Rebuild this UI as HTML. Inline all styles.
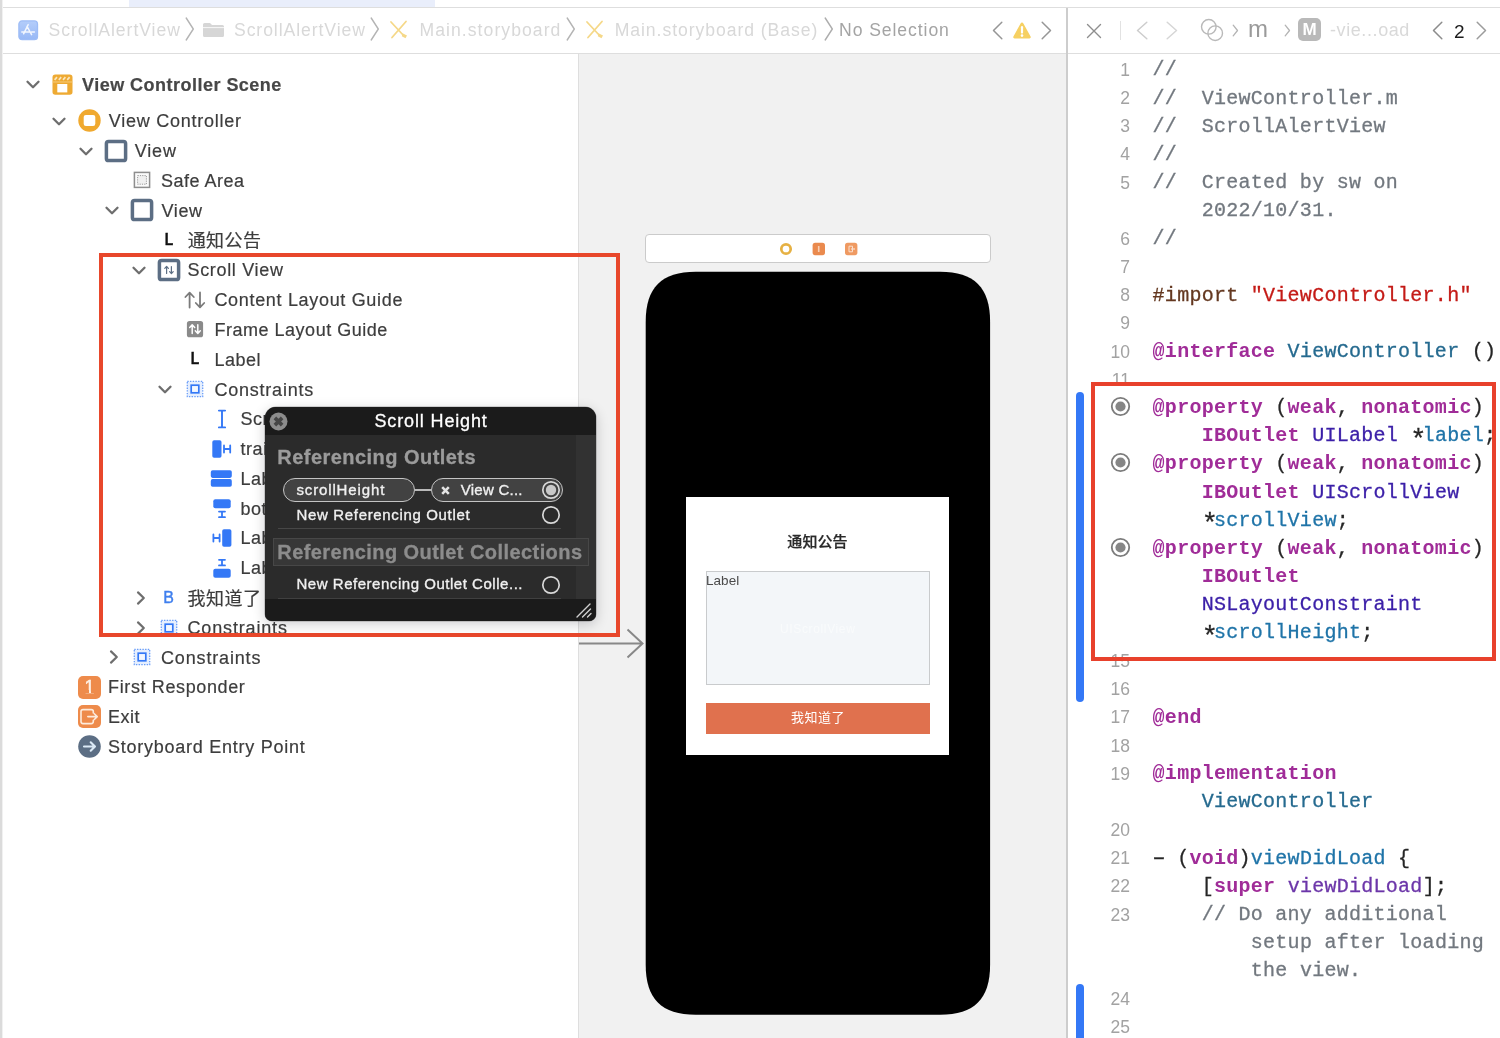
<!DOCTYPE html>
<html lang="en">
<head>
<meta charset="utf-8">
<title>Main.storyboard — ScrollAlertView</title>
<style>
*{box-sizing:border-box;margin:0;padding:0}
html,body{width:1500px;height:1038px;overflow:hidden;background:#fff}
body{position:relative;font-family:"Liberation Sans","Noto Sans CJK SC",sans-serif;color:#3a3a3a}
.abs{position:absolute}
#root{position:absolute;left:0;top:0;width:1500px;height:1038px;overflow:hidden;will-change:transform;background:#fff}
.t{position:absolute;height:30px;line-height:30px;white-space:pre}
#outlinewrap .t{-webkit-text-stroke:0.2px currentColor}
#tab{left:129px;top:0;width:305.5px;height:7px;background:#e9eefb}
#topline{left:0;top:6.8px;width:1500px;height:1.2px;background:#dedede}
#barline{left:0;top:52.8px;width:1500px;height:1.2px;background:#dedede}
#leftedge{left:0;top:0;width:3.2px;height:1038px;background:linear-gradient(90deg,#dbdbdb 0,#dbdbdb 1.6px,#efefef 1.6px,#f3f3f3 3.2px)}
#canvas{left:578px;top:54px;width:489px;height:984px;background:#f1f1f1;border-left:1px solid #dedede}
#divider{left:1066px;top:8px;width:1.6px;height:1030px;background:#cdcdcd}
#outline{left:3px;top:54px;width:575px;height:984px;overflow:hidden}
.ln{position:absolute;left:1068px;width:62px;text-align:right;font-family:"Liberation Sans",sans-serif;font-size:17.5px;color:#a2a2a2;height:28px;line-height:28px}
.cl{position:absolute;font-family:"Liberation Mono",monospace;font-size:20px;letter-spacing:0.27px;white-space:pre;height:28px;line-height:28px;color:#262626}
.cl{-webkit-text-stroke:0.3px currentColor}
.cl span{-webkit-text-stroke:0.3px currentColor}
.cl .kw{-webkit-text-stroke:0}
.as{display:inline-block;width:12.27px;text-align:center;letter-spacing:0;font-size:27px;line-height:0;position:relative;top:6.5px}
.mn{display:inline-block;transform:scaleX(1.7)}
.cm{color:#72787f}
.kw{color:#a02c98;font-weight:bold}
.st{color:#c41a16}
.pp{color:#643820}
.ty{color:#256a8f}
.cls{color:#3b1fa8}
.dec{color:#1f74a8}
.oth{color:#6c36a9}
</style>
</head>
<body>
<div id="root">
<div id="tab" class="abs"></div>
<div id="topline" class="abs"></div>
<div id="barline" class="abs"></div>
<!-- jump bar -->
<svg class="abs" style="left:17.6px;top:20px" width="21" height="21" viewBox="0 0 21 21"><defs><linearGradient id="pg" x1="0" y1="0" x2="0" y2="1"><stop offset="0" stop-color="#b4cdfa"/><stop offset="1" stop-color="#97b8f6"/></linearGradient></defs><rect x="0.9" y="0.9" width="18.6" height="18.8" rx="3.2" fill="url(#pg)" stroke="#9dbcf6" stroke-width="1.3"/><path d="M10.2 4.6 L5.6 13.8 M9 6.4 L13.6 14.6 M3.8 12 H12.2 M13.6 12 H16.4" stroke="#f2f6fe" stroke-width="1.5" fill="none" stroke-linecap="round"/></svg>
<div class="t" style="left:48.5px;top:15.4px;font-size:17.6px;font-weight:normal;color:#d8d8d8;letter-spacing:0.96px;font-family:'Liberation Sans','Noto Sans CJK SC',sans-serif;">ScrollAlertView</div>
<svg class="abs" style="left:185px;top:17px" width="10" height="24" viewBox="0 0 10 24"><path d="M1.2 1 L8.3 12 L1.2 23" fill="none" stroke="#b4b4b4" stroke-width="1.4" stroke-linecap="round" stroke-linejoin="round"/></svg>
<svg class="abs" style="left:202px;top:22px" width="23" height="16" viewBox="0 0 23 16"><path d="M1 2.5 Q1 1 2.5 1 H8 L10 3 H20.5 Q22 3 22 4.5 V13.5 Q22 15 20.5 15 H2.5 Q1 15 1 13.5 Z" fill="#d6d6d6"/><path d="M1 5.6 H22" stroke="#fff" stroke-width="0.8"/></svg>
<div class="t" style="left:234.0px;top:15.4px;font-size:17.6px;font-weight:normal;color:#d8d8d8;letter-spacing:0.92px;font-family:'Liberation Sans','Noto Sans CJK SC',sans-serif;">ScrollAlertView</div>
<svg class="abs" style="left:370px;top:17px" width="10" height="24" viewBox="0 0 10 24"><path d="M1.2 1 L8.3 12 L1.2 23" fill="none" stroke="#b4b4b4" stroke-width="1.4" stroke-linecap="round" stroke-linejoin="round"/></svg>
<svg class="abs" style="left:389px;top:20px" width="20" height="20" viewBox="0 0 20 20"><path d="M2 2 L15 16 M17 1.5 L3 17.5" stroke="#f5d888" stroke-width="1.8" stroke-linecap="round"/><path d="M13.5 13.2 L18 15.5 L16.5 18.3 L12.8 16.2 Z" fill="#f5d888"/></svg>
<div class="t" style="left:419.5px;top:15.4px;font-size:17.6px;font-weight:normal;color:#d8d8d8;letter-spacing:1.05px;font-family:'Liberation Sans','Noto Sans CJK SC',sans-serif;">Main.storyboard</div>
<svg class="abs" style="left:566px;top:17px" width="10" height="24" viewBox="0 0 10 24"><path d="M1.2 1 L8.3 12 L1.2 23" fill="none" stroke="#b4b4b4" stroke-width="1.4" stroke-linecap="round" stroke-linejoin="round"/></svg>
<svg class="abs" style="left:584.5px;top:20px" width="20" height="20" viewBox="0 0 20 20"><path d="M2 2 L15 16 M17 1.5 L3 17.5" stroke="#f5d888" stroke-width="1.8" stroke-linecap="round"/><path d="M13.5 13.2 L18 15.5 L16.5 18.3 L12.8 16.2 Z" fill="#f5d888"/></svg>
<div class="t" style="left:614.7px;top:15.4px;font-size:17.6px;font-weight:normal;color:#d8d8d8;letter-spacing:0.94px;font-family:'Liberation Sans','Noto Sans CJK SC',sans-serif;">Main.storyboard (Base)</div>
<svg class="abs" style="left:824px;top:17px" width="10" height="24" viewBox="0 0 10 24"><path d="M1.2 1 L8.3 12 L1.2 23" fill="none" stroke="#adadad" stroke-width="1.4" stroke-linecap="round" stroke-linejoin="round"/></svg>
<div class="t" style="left:839.0px;top:15.4px;font-size:17.6px;font-weight:normal;color:#a4a4a4;letter-spacing:0.92px;font-family:'Liberation Sans','Noto Sans CJK SC',sans-serif;">No Selection</div>
<svg class="abs" style="left:991.5px;top:21.0px" width="11" height="19" viewBox="0 0 11 19"><path d="M9.8 1.2 L1.5 9.5 L9.8 17.8" fill="none" stroke="#969696" stroke-width="1.5" stroke-linecap="round" stroke-linejoin="round"/></svg>
<svg class="abs" style="left:1012px;top:21px" width="20" height="19" viewBox="0 0 20 19"><path d="M10 1.6 Q10.9 1.6 11.4 2.5 L18.6 15.4 Q19.3 17.3 17.4 17.5 H2.6 Q0.7 17.3 1.4 15.4 L8.6 2.5 Q9.1 1.6 10 1.6 Z" fill="#f6d062"/><path d="M10 6.2 V11.6" stroke="#fff" stroke-width="2.2" stroke-linecap="round"/><circle cx="10" cy="14.6" r="1.3" fill="#fff"/></svg>
<svg class="abs" style="left:1040.5px;top:21.0px" width="11" height="19" viewBox="0 0 11 19"><path d="M1.2 1.2 L9.5 9.5 L1.2 17.8" fill="none" stroke="#969696" stroke-width="1.5" stroke-linecap="round" stroke-linejoin="round"/></svg>
<svg class="abs" style="left:1086px;top:23px" width="16" height="16" viewBox="0 0 16 16"><path d="M1.5 1.5 L14.5 14.5 M14.5 1.5 L1.5 14.5" stroke="#8e8e8e" stroke-width="1.4" stroke-linecap="round"/></svg>
<div class="abs" style="left:1119.5px;top:21px;width:1.5px;height:19px;background:#e2e2e2"></div>
<svg class="abs" style="left:1136px;top:21.0px" width="12" height="19" viewBox="0 0 12 19"><path d="M10.8 1.2 L1.5 9.5 L10.8 17.8" fill="none" stroke="#cdcdcd" stroke-width="1.5" stroke-linecap="round" stroke-linejoin="round"/></svg>
<svg class="abs" style="left:1166px;top:21.0px" width="12" height="19" viewBox="0 0 12 19"><path d="M1.2 1.2 L10.5 9.5 L1.2 17.8" fill="none" stroke="#d6d6d6" stroke-width="1.5" stroke-linecap="round" stroke-linejoin="round"/></svg>
<svg class="abs" style="left:1200px;top:18px" width="24" height="24" viewBox="0 0 24 24"><circle cx="8.8" cy="8.8" r="7.3" fill="none" stroke="#b9b9b9" stroke-width="1.4"/><circle cx="15.2" cy="15.2" r="7.3" fill="none" stroke="#b9b9b9" stroke-width="1.4"/></svg>
<svg class="abs" style="left:1232px;top:24.0px" width="7" height="13" viewBox="0 0 7 13"><path d="M1.2 1.2 L5.5 6.5 L1.2 11.8" fill="none" stroke="#b4b4b4" stroke-width="1.3" stroke-linecap="round" stroke-linejoin="round"/></svg>
<div class="t" style="left:1248.0px;top:13.5px;font-size:24px;font-weight:normal;color:#9a9a9a;letter-spacing:0.90px;font-family:'Liberation Sans','Noto Sans CJK SC',sans-serif;">m</div>
<svg class="abs" style="left:1284px;top:24.0px" width="7" height="13" viewBox="0 0 7 13"><path d="M1.2 1.2 L5.5 6.5 L1.2 11.8" fill="none" stroke="#b4b4b4" stroke-width="1.3" stroke-linecap="round" stroke-linejoin="round"/></svg>
<div class="abs" style="left:1298px;top:18px;width:23px;height:23px;border-radius:5px;background:#b9b9b9;color:#fff;font-weight:bold;font-size:17px;line-height:23px;text-align:center">M</div>
<div class="t" style="left:1330.0px;top:15.0px;font-size:18px;font-weight:normal;color:#d9d9d9;letter-spacing:0.59px;font-family:'Liberation Sans','Noto Sans CJK SC',sans-serif;">-vie...oad</div>
<svg class="abs" style="left:1432px;top:21.0px" width="11" height="19" viewBox="0 0 11 19"><path d="M9.8 1.2 L1.5 9.5 L9.8 17.8" fill="none" stroke="#8c8c8c" stroke-width="1.5" stroke-linecap="round" stroke-linejoin="round"/></svg>
<div class="t" style="left:1454.0px;top:17.0px;font-size:19px;font-weight:normal;color:#1c1c1c;letter-spacing:0.00px;font-family:'Liberation Sans','Noto Sans CJK SC',sans-serif;">2</div>
<svg class="abs" style="left:1476px;top:21.0px" width="11" height="19" viewBox="0 0 11 19"><path d="M1.2 1.2 L9.5 9.5 L1.2 17.8" fill="none" stroke="#9c9c9c" stroke-width="1.5" stroke-linecap="round" stroke-linejoin="round"/></svg>
<!-- document outline -->
<div id="outlinewrap">
<svg class="abs" style="left:24.8px;top:79.1px" width="16" height="12" viewBox="0 0 16 12"><path d="M2.5 2.8 L8 8.3 L13.5 2.8" fill="none" stroke="#6e6e6e" stroke-width="2.3" stroke-linecap="round" stroke-linejoin="round"/></svg>
<svg class="abs" style="left:52px;top:73.5px" width="21" height="21" viewBox="0 0 21 21"><rect x="0.5" y="0.6" width="20" height="20.2" rx="2.8" fill="#eeaa33"/><rect x="5.3" y="10" width="10" height="8.4" fill="#fff"/><path d="M0.5 8 H20.5" stroke="#f6cf85" stroke-width="0.9"/><path d="M2.6 5.8 L5 3.2 M6.8 5.8 L9.2 3.2 M11 5.8 L13.4 3.2 M15.2 5.8 L17.6 3.2" stroke="#fbe6bd" stroke-width="1.7"/></svg>
<div class="t" style="left:82.0px;top:70.2px;font-size:18px;font-weight:bold;color:#474747;letter-spacing:0.48px;font-family:'Liberation Sans','Noto Sans CJK SC',sans-serif;">View Controller Scene</div>
<svg class="abs" style="left:50.8px;top:116.1px" width="16" height="12" viewBox="0 0 16 12"><path d="M2.5 2.8 L8 8.3 L13.5 2.8" fill="none" stroke="#6e6e6e" stroke-width="2.3" stroke-linecap="round" stroke-linejoin="round"/></svg>
<svg class="abs" style="left:77.9px;top:109.1px" width="23" height="23" viewBox="0 0 23 23"><circle cx="11.5" cy="11.5" r="11.2" fill="#f0a92f"/><rect x="5.7" y="5.9" width="11.6" height="11" rx="2.2" fill="#fff"/></svg>
<div class="t" style="left:108.8px;top:106.4px;font-size:18px;font-weight:normal;color:#3d3d3d;letter-spacing:0.74px;font-family:'Liberation Sans','Noto Sans CJK SC',sans-serif;">View Controller</div>
<svg class="abs" style="left:77.8px;top:145.6px" width="16" height="12" viewBox="0 0 16 12"><path d="M2.5 2.8 L8 8.3 L13.5 2.8" fill="none" stroke="#6e6e6e" stroke-width="2.3" stroke-linecap="round" stroke-linejoin="round"/></svg>
<svg class="abs" style="left:103.8px;top:138.5px" width="24" height="24" viewBox="0 0 24 24"><rect x="2.4" y="2.4" width="19.2" height="19.2" rx="2.2" fill="#fff" stroke="#5c6e84" stroke-width="3.5"/></svg>
<div class="t" style="left:134.8px;top:135.7px;font-size:18px;font-weight:normal;color:#3d3d3d;letter-spacing:0.80px;font-family:'Liberation Sans','Noto Sans CJK SC',sans-serif;">View</div>
<svg class="abs" style="left:132.8px;top:171.4px" width="18" height="18" viewBox="0 0 18 18"><rect x="1.4" y="1.4" width="15.2" height="15" fill="#fbfbfb" stroke="#8e8e8e" stroke-width="1.5"/><rect x="4.6" y="4.6" width="8.8" height="8.6" fill="#f0f0f0" stroke="#9a9a9a" stroke-width="1" stroke-dasharray="1.2 1.1"/></svg>
<div class="t" style="left:161.0px;top:165.5px;font-size:18px;font-weight:normal;color:#3d3d3d;letter-spacing:0.50px;font-family:'Liberation Sans','Noto Sans CJK SC',sans-serif;">Safe Area</div>
<svg class="abs" style="left:103.8px;top:205.1px" width="16" height="12" viewBox="0 0 16 12"><path d="M2.5 2.8 L8 8.3 L13.5 2.8" fill="none" stroke="#6e6e6e" stroke-width="2.3" stroke-linecap="round" stroke-linejoin="round"/></svg>
<svg class="abs" style="left:130.4px;top:198.2px" width="24" height="24" viewBox="0 0 24 24"><rect x="2.4" y="2.4" width="19.2" height="19.2" rx="2.2" fill="#fff" stroke="#5c6e84" stroke-width="3.5"/></svg>
<div class="t" style="left:161.5px;top:195.8px;font-size:18px;font-weight:normal;color:#3d3d3d;letter-spacing:0.63px;font-family:'Liberation Sans','Noto Sans CJK SC',sans-serif;">View</div>
<div class="abs" style="left:162.5px;top:229.5px;width:12px;height:20px;line-height:20px;text-align:center;font-weight:bold;font-size:15.8px;color:#111;-webkit-text-stroke:0.4px #111;transform:scaleX(0.88)">L</div>
<div class="t" style="left:187.7px;top:225.7px;font-size:18px;font-weight:normal;color:#3d3d3d;letter-spacing:0.40px;font-family:'Liberation Sans','Noto Sans CJK SC',sans-serif;">通知公告</div>
<svg class="abs" style="left:130.8px;top:265.1px" width="16" height="12" viewBox="0 0 16 12"><path d="M2.5 2.8 L8 8.3 L13.5 2.8" fill="none" stroke="#6e6e6e" stroke-width="2.3" stroke-linecap="round" stroke-linejoin="round"/></svg>
<svg class="abs" style="left:156.7px;top:257.8px" width="24" height="24" viewBox="0 0 24 24"><rect x="2.4" y="2.4" width="19.2" height="19.2" rx="2.2" fill="#fff" stroke="#5c6e84" stroke-width="3.5"/><path d="M9.6 15.4 V8.6 M7.8 10.4 L9.6 8.4 L11.4 10.4 M14.4 8.6 V15.4 M12.6 13.6 L14.4 15.6 L16.2 13.6" fill="none" stroke="#5c6e84" stroke-width="1.2" stroke-linecap="round" stroke-linejoin="round"/></svg>
<div class="t" style="left:187.5px;top:254.8px;font-size:18px;font-weight:normal;color:#3d3d3d;letter-spacing:0.67px;font-family:'Liberation Sans','Noto Sans CJK SC',sans-serif;">Scroll View</div>
<svg class="abs" style="left:183.3px;top:290px" width="24" height="20" viewBox="0 0 24 20"><path d="M6.6 17.6 V2.8 M2.4 7 L6.6 2.6 L10.8 7 M17 2.4 V17.2 M12.8 13 L17 17.4 L21.2 13" fill="none" stroke="#7b7b7b" stroke-width="1.8" stroke-linecap="round" stroke-linejoin="round"/></svg>
<div class="t" style="left:214.4px;top:285.2px;font-size:18px;font-weight:normal;color:#3d3d3d;letter-spacing:0.68px;font-family:'Liberation Sans','Noto Sans CJK SC',sans-serif;">Content Layout Guide</div>
<svg class="abs" style="left:186px;top:320.20000000000005px" width="18" height="18" viewBox="0 0 18 18"><rect x="0.9" y="0.9" width="16.2" height="16.4" rx="2.6" fill="#8a8a8a"/><path d="M6.2 13.4 V4.9 M3.7 7.4 L6.2 4.7 L8.7 7.4 M11.8 4.7 V13.2 M9.3 10.7 L11.8 13.4 L14.3 10.7" fill="none" stroke="#fff" stroke-width="1.5" stroke-linecap="round" stroke-linejoin="round"/></svg>
<div class="t" style="left:214.4px;top:315.2px;font-size:18px;font-weight:normal;color:#3d3d3d;letter-spacing:0.52px;font-family:'Liberation Sans','Noto Sans CJK SC',sans-serif;">Frame Layout Guide</div>
<div class="abs" style="left:189px;top:348.8px;width:12px;height:20px;line-height:20px;text-align:center;font-weight:bold;font-size:15.8px;color:#111;-webkit-text-stroke:0.4px #111;transform:scaleX(0.88)">L</div>
<div class="t" style="left:214.4px;top:344.8px;font-size:18px;font-weight:normal;color:#3d3d3d;letter-spacing:0.51px;font-family:'Liberation Sans','Noto Sans CJK SC',sans-serif;">Label</div>
<svg class="abs" style="left:156.8px;top:384.1px" width="16" height="12" viewBox="0 0 16 12"><path d="M2.5 2.8 L8 8.3 L13.5 2.8" fill="none" stroke="#6e6e6e" stroke-width="2.3" stroke-linecap="round" stroke-linejoin="round"/></svg>
<svg class="abs" style="left:186px;top:380.3px" width="18" height="18" viewBox="0 0 18 18"><rect x="1.3" y="1.3" width="15.4" height="15.4" fill="#e6effe" stroke="#6a9df8" stroke-width="1.3" stroke-dasharray="1.4 1.3"/><rect x="5.2" y="5.2" width="7.6" height="7.6" fill="#f4f8ff" stroke="#3478f6" stroke-width="1.7"/></svg>
<div class="t" style="left:214.4px;top:374.6px;font-size:18px;font-weight:normal;color:#3d3d3d;letter-spacing:0.78px;font-family:'Liberation Sans','Noto Sans CJK SC',sans-serif;">Constraints</div>
<svg class="abs" style="left:216.8px;top:409.3px" width="10" height="20" viewBox="0 0 10 20"><path d="M1.9 1.6 H8.1 M5 1.6 V18.4 M1.9 18.4 H8.1" stroke="#3478f6" stroke-width="1.9" fill="none" stroke-linecap="round"/></svg>
<div class="t" style="left:240.5px;top:404.2px;font-size:18px;font-weight:normal;color:#3d3d3d;letter-spacing:0.55px;font-family:'Liberation Sans','Noto Sans CJK SC',sans-serif;">Scr</div>
<svg class="abs" style="left:211.3px;top:439.8px" width="21" height="18" viewBox="0 0 21 18"><rect x="1.3" y="0.3" width="9.2" height="17.4" rx="1.8" fill="#3478f6"/><path d="M13 5.4 V12.6 M13 9 H19.2 M19.2 5.4 V12.6" stroke="#3478f6" stroke-width="1.8" fill="none" stroke-linecap="round"/></svg>
<div class="t" style="left:240.5px;top:434.0px;font-size:18px;font-weight:normal;color:#3d3d3d;letter-spacing:0.55px;font-family:'Liberation Sans','Noto Sans CJK SC',sans-serif;">trai</div>
<svg class="abs" style="left:210.3px;top:469.9px" width="22" height="17" viewBox="0 0 22 17"><rect x="0.8" y="0.3" width="21" height="7.6" rx="1.8" fill="#3478f6"/><rect x="0.8" y="9.1" width="21" height="7.6" rx="1.8" fill="#3478f6"/></svg>
<div class="t" style="left:240.5px;top:463.8px;font-size:18px;font-weight:normal;color:#3d3d3d;letter-spacing:0.55px;font-family:'Liberation Sans','Noto Sans CJK SC',sans-serif;">Lab</div>
<svg class="abs" style="left:212.5px;top:498.6px" width="18" height="20" viewBox="0 0 18 20"><rect x="0.3" y="0.3" width="17.4" height="9" rx="2" fill="#3478f6"/><path d="M6 12.6 H12 M9 12.6 V18.2 M6 18.2 H12" stroke="#3478f6" stroke-width="1.8" fill="none" stroke-linecap="round"/></svg>
<div class="t" style="left:240.5px;top:493.6px;font-size:18px;font-weight:normal;color:#3d3d3d;letter-spacing:0.55px;font-family:'Liberation Sans','Noto Sans CJK SC',sans-serif;">bot</div>
<svg class="abs" style="left:211.3px;top:529px" width="21" height="18" viewBox="0 0 21 18"><rect x="11.2" y="0.3" width="9.2" height="17.4" rx="1.8" fill="#3478f6"/><path d="M2.4 5.4 V12.6 M2.4 9 H8.6 M8.6 5.4 V12.6" stroke="#3478f6" stroke-width="1.8" fill="none" stroke-linecap="round"/></svg>
<div class="t" style="left:240.5px;top:523.4px;font-size:18px;font-weight:normal;color:#3d3d3d;letter-spacing:0.55px;font-family:'Liberation Sans','Noto Sans CJK SC',sans-serif;">Lab</div>
<svg class="abs" style="left:212.5px;top:557.6px" width="18" height="20" viewBox="0 0 18 20"><rect x="0.3" y="10.7" width="17.4" height="9" rx="2" fill="#3478f6"/><path d="M6 1.8 H12 M9 1.8 V7.4 M6 7.4 H12" stroke="#3478f6" stroke-width="1.8" fill="none" stroke-linecap="round"/></svg>
<div class="t" style="left:240.5px;top:553.2px;font-size:18px;font-weight:normal;color:#3d3d3d;letter-spacing:0.55px;font-family:'Liberation Sans','Noto Sans CJK SC',sans-serif;">Lab</div>
<svg class="abs" style="left:135px;top:589.8px" width="12" height="16" viewBox="0 0 12 16"><path d="M3 2.4 L8.8 8 L3 13.6" fill="none" stroke="#6e6e6e" stroke-width="2.2" stroke-linecap="round" stroke-linejoin="round"/></svg>
<div class="abs" style="left:161.5px;top:588px;width:14px;height:20px;line-height:20px;text-align:center;font-size:16px;color:#3f7fee;-webkit-text-stroke:0.4px #3f7fee">B</div>
<div class="t" style="left:187.5px;top:583.7px;font-size:18px;font-weight:normal;color:#3d3d3d;letter-spacing:0.47px;font-family:'Liberation Sans','Noto Sans CJK SC',sans-serif;">我知道了</div>
<svg class="abs" style="left:135px;top:619.6px" width="12" height="16" viewBox="0 0 12 16"><path d="M3 2.4 L8.8 8 L3 13.6" fill="none" stroke="#6e6e6e" stroke-width="2.2" stroke-linecap="round" stroke-linejoin="round"/></svg>
<svg class="abs" style="left:159.5px;top:618.6px" width="18" height="18" viewBox="0 0 18 18"><rect x="1.3" y="1.3" width="15.4" height="15.4" fill="#e6effe" stroke="#6a9df8" stroke-width="1.3" stroke-dasharray="1.4 1.3"/><rect x="5.2" y="5.2" width="7.6" height="7.6" fill="#f4f8ff" stroke="#3478f6" stroke-width="1.7"/></svg>
<div class="t" style="left:187.5px;top:612.8px;font-size:18px;font-weight:normal;color:#3d3d3d;letter-spacing:0.84px;font-family:'Liberation Sans','Noto Sans CJK SC',sans-serif;">Constraints</div>
<svg class="abs" style="left:108px;top:649.4px" width="12" height="16" viewBox="0 0 12 16"><path d="M3 2.4 L8.8 8 L3 13.6" fill="none" stroke="#6e6e6e" stroke-width="2.2" stroke-linecap="round" stroke-linejoin="round"/></svg>
<svg class="abs" style="left:133px;top:648.4px" width="18" height="18" viewBox="0 0 18 18"><rect x="1.3" y="1.3" width="15.4" height="15.4" fill="#e6effe" stroke="#6a9df8" stroke-width="1.3" stroke-dasharray="1.4 1.3"/><rect x="5.2" y="5.2" width="7.6" height="7.6" fill="#f4f8ff" stroke="#3478f6" stroke-width="1.7"/></svg>
<div class="t" style="left:161.0px;top:642.6px;font-size:18px;font-weight:normal;color:#3d3d3d;letter-spacing:0.84px;font-family:'Liberation Sans','Noto Sans CJK SC',sans-serif;">Constraints</div>
<div class="abs" style="left:78.0px;top:675.5px;width:23px;height:23px;border-radius:5px;background:#ee8b4b;color:#fdf1e6;font-size:18px;line-height:23px;text-align:center;-webkit-text-stroke:0.5px #fdf1e6">1<i class="abs" style="left:6px;top:14.6px;width:5px;height:3.4px;background:#ee8b4b"></i><i class="abs" style="left:13.1px;top:14.6px;width:5px;height:3.4px;background:#ee8b4b"></i></div>
<div class="t" style="left:108.0px;top:672.4px;font-size:18px;font-weight:normal;color:#3d3d3d;letter-spacing:0.63px;font-family:'Liberation Sans','Noto Sans CJK SC',sans-serif;">First Responder</div>
<svg class="abs" style="left:78.0px;top:705.3px" width="23" height="23" viewBox="0 0 23 23"><rect width="23" height="23" rx="5" fill="#ee8b4b"/><path d="M15.3 8 V6.6 Q15.3 4.6 13.3 4.6 H5 Q3 4.6 3 6.6 V16.6 Q3 18.6 5 18.6 H13.3 Q15.3 18.6 15.3 16.6 V15.2" fill="none" stroke="#fdebdc" stroke-width="1.6" stroke-linecap="round"/><path d="M9.8 11.6 H19 M16.3 8.7 L19.2 11.6 L16.3 14.5" fill="none" stroke="#fdebdc" stroke-width="1.6" stroke-linecap="round" stroke-linejoin="round"/></svg>
<div class="t" style="left:108.0px;top:702.2px;font-size:18px;font-weight:normal;color:#3d3d3d;letter-spacing:0.46px;font-family:'Liberation Sans','Noto Sans CJK SC',sans-serif;">Exit</div>
<svg class="abs" style="left:78.0px;top:735.1px" width="23" height="23" viewBox="0 0 23 23"><circle cx="11.5" cy="11.5" r="11.3" fill="#5c6e84"/><path d="M6 11.5 H16.6 M12.7 7.3 L17 11.5 L12.7 15.7" fill="none" stroke="#dceaf6" stroke-width="2.1" stroke-linecap="round" stroke-linejoin="round"/></svg>
<div class="t" style="left:108.0px;top:732.0px;font-size:18px;font-weight:normal;color:#3d3d3d;letter-spacing:0.75px;font-family:'Liberation Sans','Noto Sans CJK SC',sans-serif;">Storyboard Entry Point</div>
</div>
<!-- canvas -->
<div id="canvas" class="abs"></div>
<div class="abs" style="left:645px;top:234.2px;width:346px;height:28.6px;background:#fff;border:1px solid #cbcbcb;border-radius:4px"></div>
<svg class="abs" style="left:779px;top:242px" width="80" height="14" viewBox="0 0 80 14"><circle cx="7" cy="7" r="4.7" fill="#fff" stroke="#e6b143" stroke-width="2.7"/><rect x="33.6" y="0.8" width="12.4" height="12.4" rx="2.6" fill="#ea8a4e"/><rect x="38.9" y="4" width="1.6" height="6" fill="#f8cfb3"/><rect x="66" y="0.8" width="12.4" height="12.4" rx="2.6" fill="#ef9a62"/><path d="M70 4.2 H73.5 V9.8 H70 Z" fill="none" stroke="#fbe0cf" stroke-width="1"/><path d="M72 7 H76" stroke="#fbe0cf" stroke-width="1.2"/></svg>
<svg class="abs" style="left:0;top:0" width="1500" height="1038" viewBox="0 0 1500 1038"><path d="M645.7 321.7 C645.7 287.45 661.45 271.7 695.7 271.7 H940.1 C974.35 271.7 990.1 287.45 990.1 321.7 V964.8 C990.1 999.05 974.35 1014.8 940.1 1014.8 H695.7 C661.45 1014.8 645.7 999.05 645.7 964.8 Z" fill="#000"/></svg>
<div class="abs" style="left:686px;top:496.5px;width:263.3px;height:258.5px;background:#fff"></div>
<div class="t" style="left:787.3px;top:526.5px;font-size:15px;font-weight:500;color:#2a2a2a;letter-spacing:0.09px;font-family:'Liberation Sans','Noto Sans CJK SC',sans-serif;-webkit-text-stroke:0.25px #2a2a2a;">通知公告</div>
<div class="abs" style="left:705.5px;top:570.5px;width:224.5px;height:114.5px;background:#f3f6f9;border:1px solid #c9cbcd"></div>
<div class="t" style="left:706.0px;top:565.5px;font-size:13.5px;font-weight:normal;color:#4a4a4a;letter-spacing:0.04px;font-family:'Liberation Sans','Noto Sans CJK SC',sans-serif;">Label</div>
<div class="t" style="left:780.0px;top:613.5px;font-size:12px;font-weight:normal;color:#f9fbfc;letter-spacing:0.64px;font-family:'Liberation Sans','Noto Sans CJK SC',sans-serif;">UIScrollView</div>
<div class="abs" style="left:705.8px;top:703.3px;width:224.4px;height:30.5px;background:#e0714e"></div>
<div class="t" style="left:791.0px;top:702.8px;font-size:13px;font-weight:normal;color:#fff;letter-spacing:0.46px;font-family:'Liberation Sans','Noto Sans CJK SC',sans-serif;">我知道了</div>
<svg class="abs" style="left:579px;top:626px" width="68" height="36" viewBox="0 0 68 36"><path d="M0 17.5 H63 M48.5 3.5 L63.5 17.5 L48.5 31.5" fill="none" stroke="#888" stroke-width="2" stroke-linejoin="miter"/></svg>
<!-- code editor -->
<div class="ln" style="top:56.0px">1</div>
<div class="cl" style="left:1152.6px;top:56.3px"><span class="cm">//</span></div>
<div class="ln" style="top:84.2px">2</div>
<div class="cl" style="left:1152.6px;top:84.5px"><span class="cm">//  ViewController.m</span></div>
<div class="ln" style="top:112.3px">3</div>
<div class="cl" style="left:1152.6px;top:112.6px"><span class="cm">//  ScrollAlertView</span></div>
<div class="ln" style="top:140.4px">4</div>
<div class="cl" style="left:1152.6px;top:140.8px"><span class="cm">//</span></div>
<div class="ln" style="top:168.6px">5</div>
<div class="cl" style="left:1152.6px;top:168.9px"><span class="cm">//  Created by sw on</span></div>
<div class="cl" style="left:1201.7px;top:197.1px"><span class="cm">2022/10/31.</span></div>
<div class="ln" style="top:224.9px">6</div>
<div class="cl" style="left:1152.6px;top:225.2px"><span class="cm">//</span></div>
<div class="ln" style="top:253.0px">7</div>
<div class="ln" style="top:281.2px">8</div>
<div class="cl" style="left:1152.6px;top:281.5px"><span class="pp">#import </span><span class="st">&quot;ViewController.h&quot;</span></div>
<div class="ln" style="top:309.4px">9</div>
<div class="ln" style="top:337.5px">10</div>
<div class="cl" style="left:1152.6px;top:337.8px"><span class="kw">@interface</span> <span class="ty">ViewController</span> ()</div>
<div class="ln" style="top:365.6px">11</div>
<svg class="abs" style="left:1110.2px;top:396.1px" width="21" height="21" viewBox="0 0 21 21"><circle cx="10.5" cy="10.5" r="8.7" fill="#fff" stroke="#7c7c7c" stroke-width="1.8"/><circle cx="10.5" cy="10.5" r="5.1" fill="#868686"/></svg>
<div class="cl" style="left:1152.6px;top:394.1px"><span class="kw">@property</span> (<span class="kw">weak</span>, <span class="kw">nonatomic</span>)</div>
<div class="cl" style="left:1201.7px;top:422.2px"><span class="kw">IBOutlet</span> <span class="cls">UILabel</span> <span class="as">*</span><span class="dec">label</span>;</div>
<svg class="abs" style="left:1110.2px;top:452.4px" width="21" height="21" viewBox="0 0 21 21"><circle cx="10.5" cy="10.5" r="8.7" fill="#fff" stroke="#7c7c7c" stroke-width="1.8"/><circle cx="10.5" cy="10.5" r="5.1" fill="#868686"/></svg>
<div class="cl" style="left:1152.6px;top:450.4px"><span class="kw">@property</span> (<span class="kw">weak</span>, <span class="kw">nonatomic</span>)</div>
<div class="cl" style="left:1201.7px;top:478.6px"><span class="kw">IBOutlet</span> <span class="cls">UIScrollView</span></div>
<div class="cl" style="left:1201.7px;top:506.7px"><span class="as">*</span><span class="dec">scrollView</span>;</div>
<svg class="abs" style="left:1110.2px;top:536.8px" width="21" height="21" viewBox="0 0 21 21"><circle cx="10.5" cy="10.5" r="8.7" fill="#fff" stroke="#7c7c7c" stroke-width="1.8"/><circle cx="10.5" cy="10.5" r="5.1" fill="#868686"/></svg>
<div class="cl" style="left:1152.6px;top:534.8px"><span class="kw">@property</span> (<span class="kw">weak</span>, <span class="kw">nonatomic</span>)</div>
<div class="cl" style="left:1201.7px;top:563.0px"><span class="kw">IBOutlet</span></div>
<div class="cl" style="left:1201.7px;top:591.1px"><span class="cls">NSLayoutConstraint</span></div>
<div class="cl" style="left:1201.7px;top:619.3px"><span class="as">*</span><span class="dec">scrollHeight</span>;</div>
<div class="ln" style="top:647.1px">15</div>
<div class="ln" style="top:675.3px">16</div>
<div class="ln" style="top:703.4px">17</div>
<div class="cl" style="left:1152.6px;top:703.7px"><span class="kw">@end</span></div>
<div class="ln" style="top:731.6px">18</div>
<div class="ln" style="top:759.8px">19</div>
<div class="cl" style="left:1152.6px;top:760.0px"><span class="kw">@implementation</span></div>
<div class="cl" style="left:1201.7px;top:788.2px"><span class="ty">ViewController</span></div>
<div class="ln" style="top:816.0px">20</div>
<div class="ln" style="top:844.2px">21</div>
<div class="cl" style="left:1152.6px;top:844.5px"><span class="mn">-</span> (<span class="kw">void</span>)<span class="dec">viewDidLoad</span> {</div>
<div class="ln" style="top:872.3px">22</div>
<div class="cl" style="left:1201.7px;top:872.6px">[<span class="kw">super</span> <span class="oth">viewDidLoad</span>];</div>
<div class="ln" style="top:900.5px">23</div>
<div class="cl" style="left:1201.7px;top:900.8px"><span class="cm">// Do any additional</span></div>
<div class="cl" style="left:1250.8px;top:928.9px"><span class="cm">setup after loading</span></div>
<div class="cl" style="left:1250.8px;top:957.1px"><span class="cm">the view.</span></div>
<div class="ln" style="top:984.9px">24</div>
<div class="ln" style="top:1013.1px">25</div>
<div class="abs" style="left:1076.1px;top:392px;width:8.3px;height:310px;border-radius:4.2px;background:#3478f6"></div>
<div class="abs" style="left:1076.1px;top:984px;width:8.3px;height:80px;border-radius:4.2px;background:#3478f6"></div>
<div id="divider" class="abs"></div>
<div id="leftedge" class="abs"></div>
<!-- annotations -->
<div class="abs" style="left:99.2px;top:253.2px;width:521.2px;height:384.3px;border:4px solid #e8472b"></div>
<div class="abs" style="left:1091px;top:381.5px;width:404.8px;height:279.5px;border:4.3px solid #e8412c"></div>
<!-- connections popup -->
<div class="abs" style="left:265px;top:407px;width:331px;height:213.5px;border-radius:11px 11px 7px 7px;background:#2b2b2b;box-shadow:0 0 0 0.5px rgba(0,0,0,.3),0 3px 13px rgba(0,0,20,.2);overflow:hidden"><div class="abs" style="left:0;top:0;width:331px;height:28px;background:#1b1b1b"></div><div class="abs" style="left:310.5px;top:28px;width:20.5px;height:164px;background:#323232"></div><div class="abs" style="left:0;top:192px;width:331px;height:22px;background:#1b1b1b"></div><div class="abs" style="left:7.5px;top:131px;width:316px;height:27.5px;background:#373737;border:1px solid #474747"></div><div class="abs" style="left:13px;top:121.3px;width:283px;height:1.2px;background:#474747"></div><div class="abs" style="left:13px;top:190.8px;width:283px;height:1px;background:#404040"></div></div>
<svg class="abs" style="left:268.9px;top:411.6px" width="19" height="19" viewBox="0 0 19 19"><circle cx="9.5" cy="9.5" r="9" fill="#8c8c8c"/><path d="M5.9 5.9 L13.1 13.1 M13.1 5.9 L5.9 13.1" stroke="#454545" stroke-width="3.7" stroke-linecap="butt"/></svg>
<div class="t" style="left:374.5px;top:406.0px;font-size:18px;font-weight:normal;color:#fff;letter-spacing:0.86px;font-family:'Liberation Sans','Noto Sans CJK SC',sans-serif;-webkit-text-stroke:0.3px #fff;">Scroll Height</div>
<div class="t" style="left:277.3px;top:442.0px;font-size:20px;font-weight:bold;color:#9b9b9b;letter-spacing:0.46px;font-family:'Liberation Sans','Noto Sans CJK SC',sans-serif;-webkit-text-stroke:0.3px #9b9b9b;">Referencing Outlets</div>
<div class="abs" style="left:283.2px;top:478.3px;width:132px;height:23.5px;border-radius:12px;background:#424242;border:1.8px solid #c4c4c4"></div>
<div class="abs" style="left:415px;top:489.3px;width:16px;height:1.5px;background:#b9b9b9"></div>
<div class="abs" style="left:430.6px;top:478.3px;width:132.4px;height:23.5px;border-radius:12px;background:#424242;border:1.8px solid #c4c4c4"></div>
<div class="t" style="left:296.4px;top:475.0px;font-size:15px;font-weight:normal;color:#f0f0f0;letter-spacing:0.87px;font-family:'Liberation Sans','Noto Sans CJK SC',sans-serif;-webkit-text-stroke:0.35px #f0f0f0;">scrollHeight</div>
<svg class="abs" style="left:440px;top:484.5px" width="11" height="11" viewBox="0 0 11 11"><path d="M2.2 2.2 L8.8 8.8 M8.8 2.2 L2.2 8.8" stroke="#e4e4e4" stroke-width="2.6" stroke-linecap="butt"/></svg>
<div class="t" style="left:460.7px;top:475.0px;font-size:15px;font-weight:normal;color:#f0f0f0;letter-spacing:0.26px;font-family:'Liberation Sans','Noto Sans CJK SC',sans-serif;-webkit-text-stroke:0.35px #f0f0f0;">View C...</div>
<svg class="abs" style="left:541px;top:480px" width="20" height="20" viewBox="0 0 20 20"><circle cx="10" cy="10" r="8.2" fill="none" stroke="#d8d8d8" stroke-width="1.7"/><circle cx="10" cy="10" r="5.2" fill="#c9c9c9"/></svg>
<div class="t" style="left:296.5px;top:499.7px;font-size:15px;font-weight:normal;color:#f0f0f0;letter-spacing:0.66px;font-family:'Liberation Sans','Noto Sans CJK SC',sans-serif;-webkit-text-stroke:0.35px #f0f0f0;">New Referencing Outlet</div>
<svg class="abs" style="left:541px;top:505px" width="20" height="20" viewBox="0 0 20 20"><circle cx="10" cy="10" r="8.2" fill="none" stroke="#d8d8d8" stroke-width="1.7"/></svg>
<div class="t" style="left:277.3px;top:536.5px;font-size:20px;font-weight:bold;color:#8c8c8c;letter-spacing:0.43px;font-family:'Liberation Sans','Noto Sans CJK SC',sans-serif;-webkit-text-stroke:0.3px #8c8c8c;">Referencing Outlet Collections</div>
<div class="t" style="left:296.5px;top:569.3px;font-size:15px;font-weight:normal;color:#f0f0f0;letter-spacing:0.53px;font-family:'Liberation Sans','Noto Sans CJK SC',sans-serif;-webkit-text-stroke:0.35px #f0f0f0;">New Referencing Outlet Colle...</div>
<svg class="abs" style="left:541px;top:574.7px" width="20" height="20" viewBox="0 0 20 20"><circle cx="10" cy="10" r="8.2" fill="none" stroke="#d8d8d8" stroke-width="1.7"/></svg>
<svg class="abs" style="left:575px;top:602px" width="18" height="17" viewBox="0 0 18 17"><path d="M2 15 L15 2 M7.5 15 L15.5 7 M12.5 15 L16 11.5" stroke="#cfcfcf" stroke-width="1.4" stroke-linecap="round"/></svg>
</div>
</body>
</html>
